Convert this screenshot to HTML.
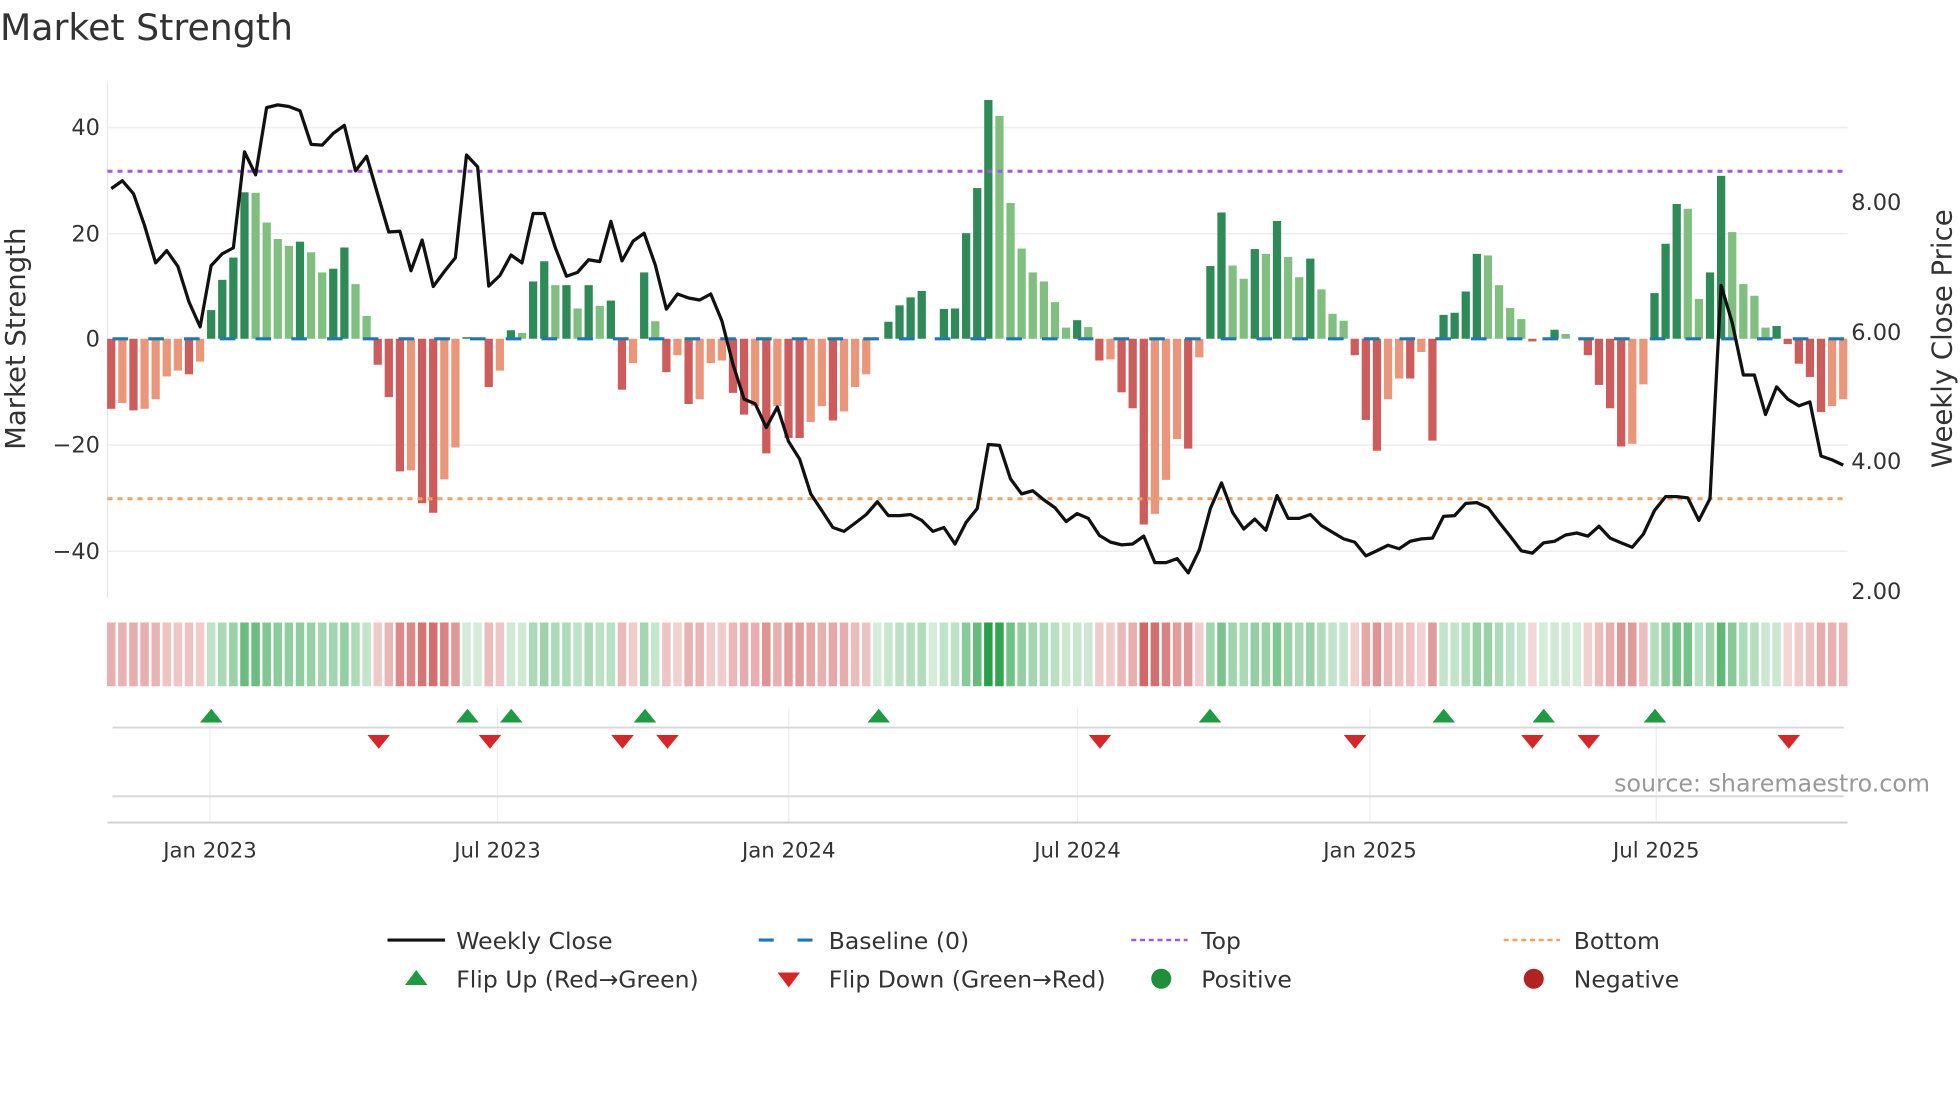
<!DOCTYPE html>
<html><head><meta charset="utf-8"><style>
html,body{margin:0;padding:0;background:#fff;}
svg{display:block;font-family:"DejaVu Sans","Liberation Sans",sans-serif;}
</style></head><body>
<svg id="s" width="1960" height="1102" viewBox="0 0 1568 881.6" xmlns="http://www.w3.org/2000/svg">
<rect width="1568" height="882" fill="#fff"/>
<text x="0" y="32" font-size="29" fill="#333">Market Strength</text>
<g stroke="#eceef2" stroke-width="1.2">
<line x1="86" x2="1478" y1="102" y2="102"/><line x1="86" x2="1478" y1="187" y2="187"/>
<line x1="86" x2="1478" y1="356" y2="356"/><line x1="86" x2="1478" y1="441" y2="441"/>
</g>
<line x1="86" x2="86" y1="65" y2="478" stroke="#e6e6e6" stroke-width="1"/>
<g font-size="18" fill="#333" text-anchor="end">
<text x="80" y="108">40</text><text x="80" y="193">20</text><text x="80" y="277">0</text>
<text x="80" y="362">−20</text><text x="80" y="447">−40</text>
</g>
<g font-size="18" fill="#333">
<text x="1481" y="168">8.00</text><text x="1481" y="272">6.00</text>
<text x="1481" y="375">4.00</text><text x="1481" y="479">2.00</text>
</g>
<text transform="translate(20,271) rotate(-90)" text-anchor="middle" font-size="22" fill="#333">Market Strength</text>
<text transform="translate(1561,271) rotate(-90)" text-anchor="middle" font-size="22" fill="#333">Weekly Close Price</text>
<g id="bars"></g>
<line x1="86" x2="1478" y1="137" y2="137" stroke="#9b5de5" stroke-width="2.4" stroke-dasharray="4,4"/>
<line x1="86" x2="1478" y1="399" y2="399" stroke="#f4a261" stroke-width="2.4" stroke-dasharray="4,4"/>
<line x1="86" x2="1478" y1="271" y2="271" stroke="#1f77b4" stroke-width="2.5" stroke-dasharray="12.5,16.1" stroke-dashoffset="-4"/>
<polyline id="pl" fill="none" stroke="#111" stroke-width="2.6" stroke-linejoin="round"/>
<g id="heat"></g>
<g stroke="#eeeeee" stroke-width="1">
<line x1="168" x2="168" y1="566" y2="658"/><line x1="398" x2="398" y1="566" y2="658"/>
<line x1="631" x2="631" y1="566" y2="658"/><line x1="862" x2="862" y1="566" y2="658"/>
<line x1="1096" x2="1096" y1="566" y2="658"/><line x1="1325" x2="1325" y1="566" y2="658"/>
</g>
<line x1="90" x2="1475" y1="582" y2="582" stroke="#d8d8d8" stroke-width="1.5"/>
<line x1="90" x2="1475" y1="637" y2="637" stroke="#d8d8d8" stroke-width="1.5"/>
<line x1="86" x2="1478" y1="658" y2="658" stroke="#cfcfcf" stroke-width="1.5"/>
<g id="mk"></g>
<text x="1544" y="633" text-anchor="end" font-size="19" fill="#999">source: sharemaestro.com</text>
<g font-size="17" fill="#333" text-anchor="middle">
<text x="168" y="686">Jan 2023</text><text x="398" y="686">Jul 2023</text>
<text x="631" y="686">Jan 2024</text><text x="862" y="686">Jul 2024</text>
<text x="1096" y="686">Jan 2025</text><text x="1325" y="686">Jul 2025</text>
</g>
<g font-size="18.8" fill="#333">
<line x1="310" x2="356" y1="752" y2="752" stroke="#111" stroke-width="2.5"/>
<text x="365" y="759">Weekly Close</text>
<line x1="607" x2="652" y1="752" y2="752" stroke="#1f77b4" stroke-width="2.5" stroke-dasharray="12,19"/>
<text x="663" y="759">Baseline (0)</text>
<line x1="905" x2="950" y1="752" y2="752" stroke="#9b5de5" stroke-width="2" stroke-dasharray="4,3"/>
<text x="961" y="759">Top</text>
<line x1="1203" x2="1248" y1="752" y2="752" stroke="#f4a261" stroke-width="2" stroke-dasharray="4,3"/>
<text x="1259" y="759">Bottom</text>
<polygon points="324,788 342,788 333,776" fill="#1f9a45"/>
<text x="365" y="790">Flip Up (Red→Green)</text>
<polygon points="622,778 640,778 631,790" fill="#d62728"/>
<text x="663" y="790">Flip Down (Green→Red)</text>
<circle cx="929" cy="783" r="8" fill="#1f8f3a"/>
<text x="961" y="790">Positive</text>
<circle cx="1227" cy="783" r="8" fill="#b22222"/>
<text x="1259" y="790">Negative</text>
</g>
</svg>
<script>
var V=[-13.2,-12.1,-13.5,-13.2,-11.4,-7.1,-6,-6.7,-4.3,5.4,11.1,15.3,27.6,27.5,21.9,18.8,17.5,18.3,16.3,12.5,13.2,17.2,10.3,4.3,-4.9,-11,-25,-24.8,-31,-32.8,-26.5,-20.5,0.3,0,-9.1,-6,1.6,1.1,10.8,14.6,10.1,10.1,5.7,10.1,6.2,7.2,-9.6,-4.6,12.5,3.3,-6.3,-3.1,-12.3,-11.4,-4.6,-4.1,-10.2,-14.3,-12.7,-21.6,-12.7,-18.7,-18.7,-15.7,-12.7,-15.4,-13.7,-9.1,-6.7,0,3.2,6.3,7.8,9,0,5.6,5.7,19.9,28.4,45,42,25.6,17,12.5,10.8,6.9,2.1,3.5,2.2,-4.1,-3.9,-10.1,-13.1,-35,-33,-26.6,-18.9,-20.7,-3.5,13.7,23.8,13.8,11.3,16.9,16,22.2,15.4,11.6,15.1,9.3,4.7,3.4,-3.1,-15.3,-21.1,-11.4,-7.5,-7.5,-2.5,-19.2,4.5,4.9,8.9,16,15.7,10.1,5.8,3.7,-0.5,0,1.7,0.9,0,-3.1,-8.7,-13.1,-20.3,-19.8,-8.6,8.6,17.9,25.4,24.5,7.5,12.5,30.7,20.1,10.3,8.1,2.1,2.4,-1,-4.7,-7.2,-13.8,-12.7,-11.4];
var P=[275,255,288,368,463,432,472,562,625,470,440,425,182,240,70,63,67,78,163,165,135,115,230,193,290,385,383,483,405,523,485,450,190,220,522,495,443,463,338,338,425,497,487,455,460,358,458,408,388,468,580,542,552,557,542,610,720,808,820,880,828,915,960,1048,1090,1133,1143,1122,1100,1068,1103,1103,1100,1115,1143,1133,1175,1120,1085,923,925,1010,1048,1040,1063,1083,1118,1098,1110,1153,1170,1177,1175,1155,1222,1222,1212,1248,1190,1085,1020,1095,1137,1112,1140,1052,1110,1110,1100,1128,1145,1162,1170,1205,1192,1178,1187,1168,1162,1160,1105,1103,1072,1070,1083,1120,1155,1192,1198,1172,1168,1152,1147,1155,1130,1160,1172,1183,1150,1090,1055,1055,1058,1115,1060,520,615,747,747,847,777,808,825,815,952,962,975];
var NS="http://www.w3.org/2000/svg";
function el(t,a,p){var e=document.createElementNS(NS,t);for(var k in a)e.setAttribute(k,a[k]);p.appendChild(e);return e;}
var bars=document.getElementById('bars'),heat=document.getElementById('heat'),mk=document.getElementById('mk');
var pts=[];
for(var i=0;i<V.length;i++){
 var x=89+8.882*i,v=V[i],pv=i?V[i-1]:0;
 var inc=(i==0)||Math.abs(v)>=Math.abs(pv)||(v*pv<=0);
 var c=v>=0?(inc?'#2e8b57':'#80bf80'):(inc?'#cd5c5c':'#e9967a');
 if(Math.abs(v)>0.05){var h=Math.abs(v)*4.245;el('rect',{x:x-3.3,y:v>=0?271-h:271,width:6.6,height:h,fill:c},bars);}
 var t=0.2+0.8*Math.min(1,Math.abs(v)/45),base=v>=0?[40,160,70]:[200,70,70];
 var col='rgb('+base.map(function(b){return Math.round(255+(b-255)*t)}).join(',')+')';
 el('rect',{x:x-3.4,y:498,width:6.8,height:51,fill:col},heat);
 pts.push(x.toFixed(1)+','+(64+P[i]/3.165).toFixed(1));
}
document.getElementById('pl').setAttribute('points',pts.join(' '));
[169,374,409,516,703,968,1155,1235,1324].forEach(function(x){el('polygon',{points:(x-9)+',578 '+(x+9)+',578 '+x+',567',fill:'#1f9a45'},mk);});
[303,392,498,534,880,1084,1226,1271,1431].forEach(function(x){el('polygon',{points:(x-9)+',588 '+(x+9)+',588 '+x+',599',fill:'#d62728'},mk);});
</script>
</body></html>
